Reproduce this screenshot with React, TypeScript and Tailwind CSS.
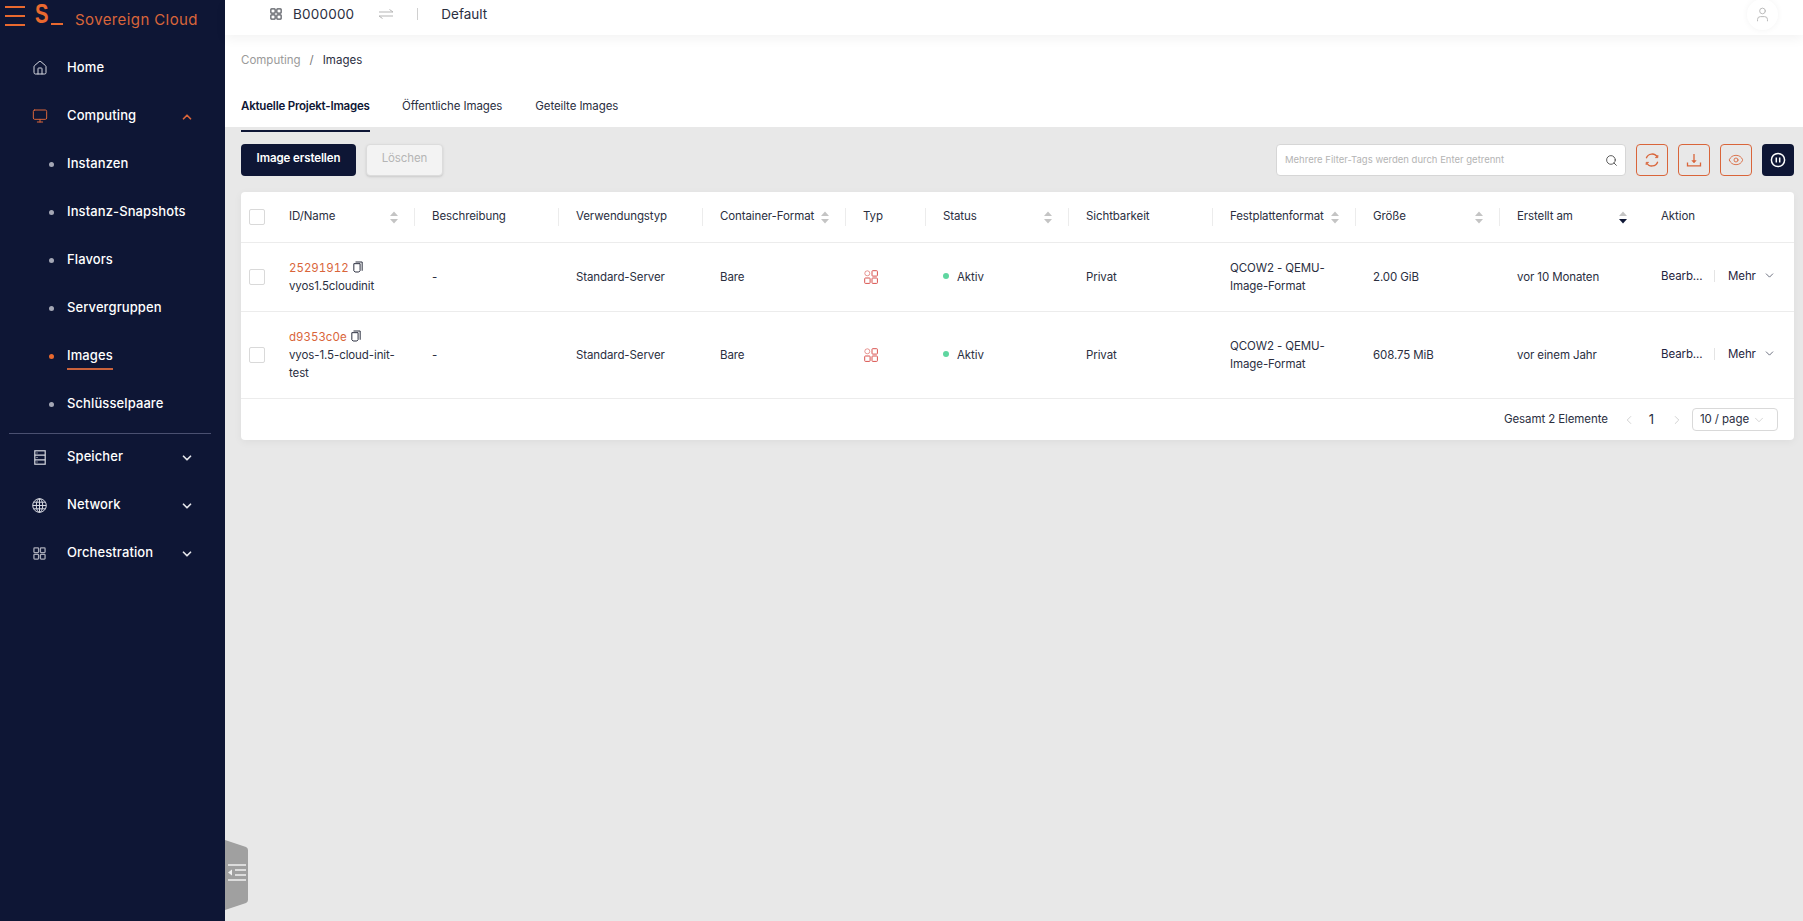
import React from 'react';
import { House, Monitor, ChevronUp, ChevronDown, ChevronLeft, ChevronRight, User, Search, Eye } from 'lucide-react';

const COLS = 'grid grid-cols-[31px_143px_144px_144px_143px_80px_143px_144px_143px_144px_144px_150px]';

const GridIcon = ({ className }: { className?: string }) => (
  <svg viewBox="0 0 14 14" className={className} fill="none" stroke="currentColor" strokeWidth="1.4">
    <rect x="1" y="1" width="5" height="5" rx="0.8" />
    <rect x="8" y="1" width="5" height="5" rx="0.8" />
    <rect x="1" y="8" width="5" height="5" rx="0.8" />
    <rect x="8" y="8" width="5" height="5" rx="0.8" />
  </svg>
);

const StorageIcon = ({ className }: { className?: string }) => (
  <svg viewBox="0 0 12 15" className={className} fill="none" stroke="currentColor" strokeWidth="1.2">
    <rect x="0.8" y="0.8" width="10.4" height="13.4" />
    <path d="M0.8 5.2h10.4M0.8 9.8h10.4M2.5 3h1M2.5 7.5h1M2.5 12h1" />
  </svg>
);

const GlobeIcon = ({ className }: { className?: string }) => (
  <svg viewBox="0 0 15 15" className={className} fill="none" stroke="currentColor" strokeWidth="1">
    <circle cx="7.5" cy="7.5" r="6.8" />
    <ellipse cx="7.5" cy="7.5" rx="3.2" ry="6.8" />
    <path d="M7.5 0.7v13.6M0.7 7.5h13.6M1.6 4.2h11.8M1.6 10.8h11.8" />
  </svg>
);

const TypeIcon = () => (
  <svg viewBox="0 0 14 14" className="w-[14px] h-[14px] text-[#d9534f]" fill="none" stroke="currentColor" strokeWidth="1">
    <circle cx="3.3" cy="3.3" r="2.5" className="opacity-60" />
    <rect x="8" y="0.7" width="5.4" height="5.4" rx="0.7" />
    <rect x="0.7" y="8" width="5.4" height="5.4" rx="0.7" />
    <rect x="8" y="8" width="5.4" height="5.4" rx="0.7" />
  </svg>
);

const CopyIcon = () => (
  <svg viewBox="0 0 12 14" className="w-[10px] h-[12px] -mt-[3px] text-[#2b2f3f]" fill="none" stroke="currentColor" strokeWidth="1.2">
    <path d="M3 1h8v10.5" />
    <path d="M1 3h7.5v8.5L7 13H2.5L1 11.5z" />
  </svg>
);

const SortIcon = ({ desc }: { desc?: boolean }) => (
  <svg viewBox="0 0 8 13" className="w-2 h-[13px] shrink-0">
    <path d="M4 0.5 8 5H0z" fill="#c4c4c4" />
    <path d="M4 12.5 8 8H0z" fill={desc ? '#0e1635' : '#c4c4c4'} />
  </svg>
);

const RefreshIcon = () => (
  <svg viewBox="0 0 16 16" className="w-4 h-4" fill="none" stroke="currentColor" strokeWidth="1.3">
    <path d="M2.3 6.3A6 6 0 0 1 13.4 5.3" />
    <path d="M13.7 9.7A6 6 0 0 1 2.6 10.7" />
    <path d="M13.8 3v2.6h-2.6M2.2 13v-2.6h2.6" strokeWidth="1" />
  </svg>
);

const DownloadIcon = () => (
  <svg viewBox="0 0 16 16" className="w-4 h-4" fill="none" stroke="currentColor" strokeWidth="1.3">
    <path d="M1.5 10.5v3.3h13v-3.3" />
    <path d="M8 2v8" />
    <path d="M5.8 8.6h4.4L8 11z" fill="currentColor" strokeWidth="0.5" />
  </svg>
);

const PauseIcon = () => (
  <svg viewBox="0 0 16 16" className="w-4 h-4" fill="none" stroke="currentColor" strokeWidth="1.5">
    <circle cx="8" cy="8" r="6.6" />
    <path d="M6.3 5.4v5.2M9.7 5.4v5.2" />
  </svg>
);

const NavRow = ({ icon, label, open, active, noArrow }: { icon: React.ReactNode; label: string; open?: boolean; active?: boolean; noArrow?: boolean }) => (
  <div className="flex items-center h-12 pl-[32px] pr-[31px]">
    <span className={active ? 'w-4 text-[#d9653a]' : 'w-4 text-[#d5d7df]'}>{icon}</span>
    <span className="ml-[19px] flex-1 text-[13px] font-medium tracking-[0.1px] text-white">{label}</span>
    {noArrow ? null : open ? (
      <ChevronUp className="w-[14px] h-[14px] mt-[2px] text-[#d9653a]" strokeWidth={3} />
    ) : (
      <ChevronDown className="w-[14px] h-[14px] mt-[2px] text-[#e3e4e9]" strokeWidth={3} />
    )}
  </div>
);

const SubRow = ({ label, active }: { label: string; active?: boolean }) => (
  <div className="flex items-center h-12 pl-[49px]">
    <span className={active ? 'w-[5px] h-[5px] rounded-full bg-[#e9692f]' : 'w-[5px] h-[5px] rounded-full bg-[#a4a7b5]'} />
    <span className="relative ml-[13px] text-[13px] font-medium tracking-[0.1px] text-white">
      {label}
      {active && <span className="absolute left-0 right-0 -bottom-[4px] h-[2px] bg-[#c9623c]" />}
    </span>
  </div>
);

const Sidebar = () => (
  <aside className="w-[225px] shrink-0 bg-[#0e1635] flex flex-col">
    <div className="h-[44px] flex items-start">
      <div className="ml-[5px] mt-[6px] flex flex-col gap-[7px]">
        <span className="block w-5 h-[2px] bg-[#e9692f]" />
        <span className="block w-5 h-[2px] bg-[#e9692f]" />
        <span className="block w-5 h-[2px] bg-[#e9692f]" />
      </div>
      <span className="ml-[10px] w-[14px] -mt-[1px] origin-left scale-x-75 text-[27px] leading-[30px] font-bold text-[#e9692f] font-['Liberation_Sans',sans-serif]">S</span>
      <span className="ml-[2px] mt-[23px] w-3 h-[2px] bg-[#e9692f]" />
      <span className="ml-[12px] mt-[9px] text-[15px] leading-[22px] tracking-[0.4px] text-[#d9653a]">Sovereign Cloud</span>
    </div>
    <NavRow icon={<House className="w-[16px] h-[16px]" strokeWidth={1.5} />} label="Home" noArrow />
    <NavRow icon={<Monitor className="w-[16px] h-[16px]" strokeWidth={1.5} />} label="Computing" open active />
    <SubRow label="Instanzen" />
    <SubRow label="Instanz-Snapshots" />
    <SubRow label="Flavors" />
    <SubRow label="Servergruppen" />
    <SubRow label="Images" active />
    <SubRow label="Schlüsselpaare" />
    <div className="mx-[9px] w-[202px] h-px bg-[#4a5070] mt-[5px] -mb-[1px]" />
    <NavRow icon={<StorageIcon className="w-[12px] h-[15px] ml-[2px]" />} label="Speicher" />
    <NavRow icon={<GlobeIcon className="w-[15px] h-[15px]" />} label="Network" />
    <NavRow icon={<GridIcon className="w-[13px] h-[13px] ml-[1px] text-[#a9abb8]" />} label="Orchestration" />
  </aside>
);

const Header = () => (
  <header className="relative z-10 h-[35px] bg-white flex items-start pt-[4px] pl-[45px] pr-[25px] text-[13.5px] leading-[20px] text-[#2b2f3f] shadow-[0_4px_12px_rgba(0,0,0,0.05)]">
    <GridIcon className="w-3 h-3 mt-1 text-[#55585f]" />
    <span className="ml-[11px] tracking-[0.2px]">B000000</span>
    <svg viewBox="0 0 14 10" className="ml-[25px] mt-[5px] w-[14px] h-[10px] text-[#b5b5b5]" fill="none" stroke="currentColor" strokeWidth="1">
      <path d="M0 3h14L10.5 0.5M14 7H0l3.5 2.5" />
    </svg>
    <span className="ml-[24px] mt-1 w-px h-3 bg-[#d0d0d0]" />
    <span className="ml-[23px]">Default</span>
    <span className="ml-auto w-[31px] h-[31px] -mt-[5px] rounded-full bg-white shadow-[0_0_6px_rgba(0,0,0,0.05)] flex items-center justify-center">
      <User className="w-[17px] h-[17px] text-[#b9b9b9]" strokeWidth={1.4} />
    </span>
  </header>
);

const Toolbar = () => (
  <div className="flex items-center h-8 text-[11.5px] tracking-[-0.1px]">
    <button className="w-[115px] h-8 pb-[2px] rounded bg-[#0e1635] text-white font-semibold">Image erstellen</button>
    <button className="ml-[10px] w-[77px] h-8 pb-[2px] rounded border border-[#dcdcdc] bg-[#f3f3f3] text-[#b5b5b5] shadow-sm">Löschen</button>
    <div className="ml-auto w-[350px] h-8 rounded border border-[#d6d6d6] bg-white flex items-center pl-2 pr-[7px]">
      <span className="flex-1 text-[9.5px] tracking-normal text-[#b4b4b4]">Mehrere Filter-Tags werden durch Enter getrennt</span>
      <Search className="w-[13px] h-[13px] text-[#444]" strokeWidth={1.6} />
    </div>
    <button className="ml-[10px] w-8 h-8 rounded border border-[#d9653a] flex items-center justify-center text-[#d9653a]"><RefreshIcon /></button>
    <button className="ml-[10px] w-8 h-8 rounded border border-[#d9653a] flex items-center justify-center text-[#d9653a]"><DownloadIcon /></button>
    <button className="ml-[10px] w-8 h-8 rounded border border-[#d9653a] flex items-center justify-center text-[#d9653a]"><Eye className="w-4 h-4" strokeWidth={1.3} /></button>
    <button className="ml-[10px] w-8 h-8 rounded bg-[#0e1635] flex items-center justify-center text-white"><PauseIcon /></button>
  </div>
);

const HeadCell = ({ label, sort, desc, last }: { label: string; sort?: boolean; desc?: boolean; last?: boolean }) => (
  <div className="relative flex items-center pl-[17px] pr-[17px] h-full">
    <span className="flex-1 whitespace-nowrap">{label}</span>
    {sort && <SortIcon desc={desc} />}
    {!last && <span className="absolute right-0 top-[16px] bottom-[16px] w-px bg-[#ececec]" />}
  </div>
);

const Checkbox = () => <span className="block w-4 h-4 ml-2 rounded-[2px] border border-[#d9d9d9] bg-white" />;

const rows = [
  { id: '25291912', name: 'vyos1.5cloudinit', size: '2.00 GiB', created: 'vor 10 Monaten' },
  { id: 'd9353c0e', name: 'vyos-1.5-cloud-init-test', size: '608.75 MiB', created: 'vor einem Jahr' },
];

const Table = () => (
  <div className="mt-4 rounded bg-white text-[11.5px] tracking-[-0.1px] text-[#2b2f3f] shadow-[0_2px_8px_rgba(0,0,0,0.05)]">
    <div className={`${COLS} h-[51px] border-b border-[#ececec] items-center`}>
      <Checkbox />
      <HeadCell label="ID/Name" sort />
      <HeadCell label="Beschreibung" />
      <HeadCell label="Verwendungstyp" />
      <HeadCell label="Container-Format" sort />
      <HeadCell label="Typ" />
      <HeadCell label="Status" sort />
      <HeadCell label="Sichtbarkeit" />
      <HeadCell label="Festplattenformat" sort />
      <HeadCell label="Größe" sort />
      <HeadCell label="Erstellt am" sort desc last />
      <HeadCell label="Aktion" last />
    </div>
    {rows.map((r) => (
      <div key={r.id} className={`${COLS} items-center border-b border-[#ececec] leading-[18px] py-[16px]`}>
        <Checkbox />
        <div className="pl-[17px] pr-[12px]">
          <div className="flex items-center gap-[4px]">
            <span className="text-[#d9653a] tracking-normal tabular-nums">{r.id}</span>
            <CopyIcon />
          </div>
          <div>{r.name}</div>
        </div>
        <div className="pl-[17px]">-</div>
        <div className="pl-[17px]">Standard-Server</div>
        <div className="pl-[17px]">Bare</div>
        <div className="pl-[18px] flex"><TypeIcon /></div>
        <div className="pl-[17px] flex items-center">
          <span className="w-[6px] h-[6px] -mt-[2px] rounded-full bg-[#5fd6a0]" />
          <span className="ml-2">Aktiv</span>
        </div>
        <div className="pl-[17px]">Privat</div>
        <div className="pl-[17px] pr-[20px]">QCOW2 - QEMU-Image-Format</div>
        <div className="pl-[17px]">{r.size}</div>
        <div className="pl-[17px]">{r.created}</div>
        <div className="pl-[17px] flex items-center -mt-[2px]">
          <span className="w-[43px] whitespace-nowrap text-[#1f2540]">Bearb...</span>
          <span className="ml-[10px] w-px h-3 bg-[#e4e4e4]" />
          <span className="ml-[13px] text-[#1f2540]">Mehr</span>
          <ChevronDown className="ml-[7px] w-[13px] h-[13px] -mt-[2px] text-[#33384d]" strokeWidth={1.3} />
        </div>
      </div>
    ))}
    <div className="h-[41px] flex items-center justify-end pr-[16px]">
      <span>Gesamt 2 Elemente</span>
      <ChevronLeft className="ml-[14px] w-[14px] h-[14px] text-[#c4c4c4]" strokeWidth={1.3} />
      <span className="ml-[13px] text-[13px]">1</span>
      <ChevronRight className="ml-[16px] w-[14px] h-[14px] text-[#c4c4c4]" strokeWidth={1.3} />
      <div className="ml-[8px] w-[86px] h-[23px] rounded border border-[#d9d9d9] flex items-center pl-[7px]">
        <span>10 / page</span>
        <ChevronDown className="ml-[3px] w-[14px] h-[14px] text-[#c4c4c4]" strokeWidth={1.2} />
      </div>
    </div>
  </div>
);

export default function App() {
  return (
    <div className="relative h-screen flex overflow-hidden bg-[#e8e8e8] font-['Inter',sans-serif]">
      <Sidebar />
      <main className="flex-1 min-w-0 flex flex-col">
        <Header />
        <div className="h-[92px] bg-white pl-[16px] text-[11.5px] tracking-[-0.1px]">
          <div className="pt-[18px] leading-[14px] tracking-normal">
            <span className="text-[#9a9a9a]">Computing</span>
            <span className="mx-[9px] text-[#777]">/</span>
            <span className="text-[#2b2f3f]">Images</span>
          </div>
          <div className="mt-[23px] flex">
            <div className="w-[129px] h-[42px] pt-[8px] border-b-2 border-[#0e1635] font-semibold tracking-[-0.2px] text-[#0e1635] whitespace-nowrap">Aktuelle Projekt-Images</div>
            <div className="ml-[32px] pt-[8px] text-[#2b2f3f]">Öffentliche Images</div>
            <div className="ml-[33px] pt-[8px] text-[#2b2f3f]">Geteilte Images</div>
          </div>
        </div>
        <div className="pt-[17px] pl-[16px] pr-[9px]">
          <Toolbar />
          <Table />
        </div>
      </main>
      <svg viewBox="0 0 23 70" className="absolute left-[225px] top-[840px] w-[23px] h-[70px]">
        <path d="M0 0 21 7Q23 8 23 10V60Q23 62 21 63L0 70z" fill="#a0a0a0" />
        <path d="M3 25h18M3 40h18M10 30h11M10 35h11" stroke="#f0f0f0" strokeWidth="1.6" />
        <path d="M3 32.5 7 29.5v6z" fill="#f0f0f0" />
      </svg>
    </div>
  );
}
